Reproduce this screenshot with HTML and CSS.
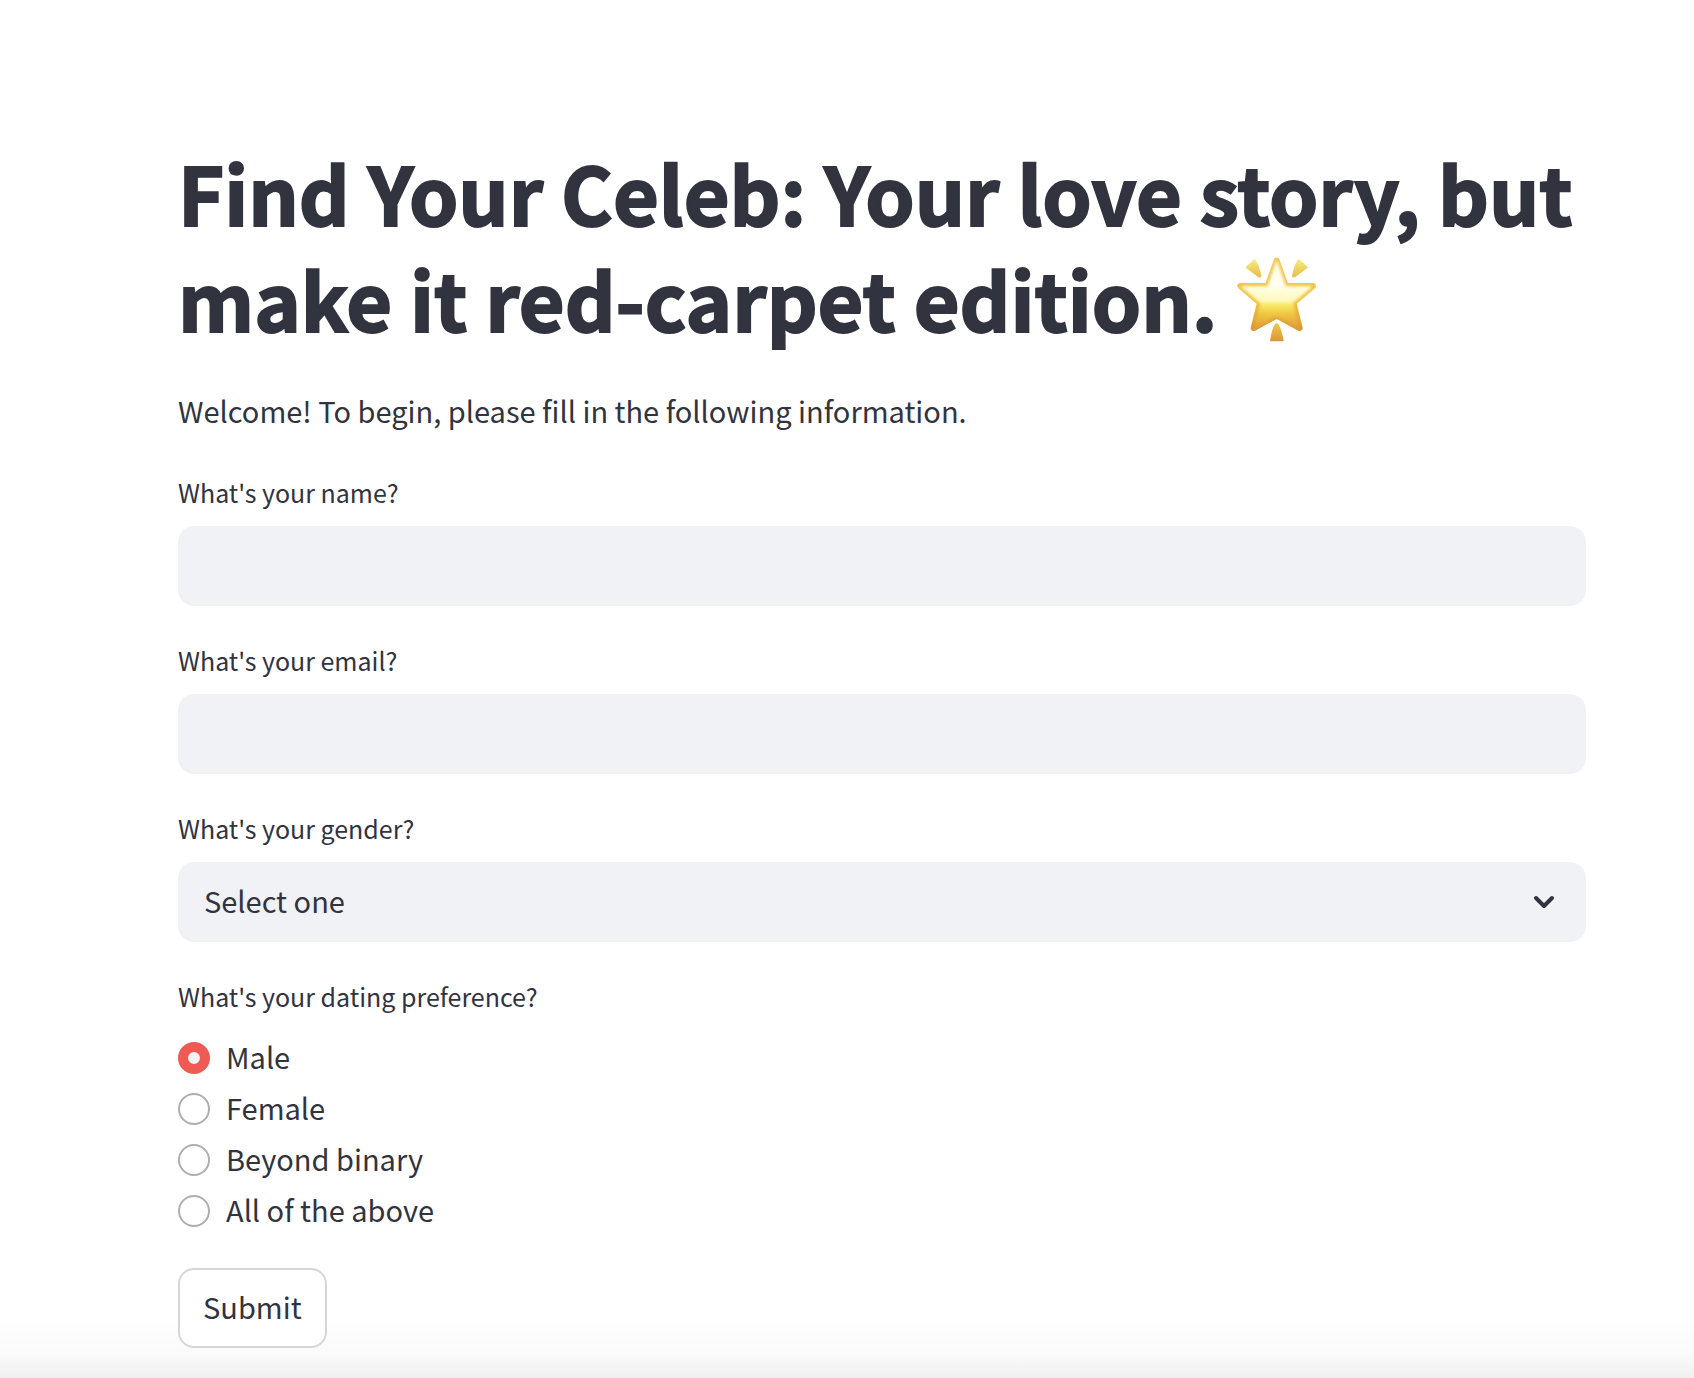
FILE: index.html
```html
<!DOCTYPE html>
<html lang="en">
<head>
    <meta charset="UTF-8">
    <meta name="viewport" content="width=device-width, initial-scale=1.0">
    <title>Find Your Celeb</title>
    <link rel="stylesheet" href="styles.css">
</head>
<body>
    <main class="container">
        <h1 class="title">
            Find Your Celeb: Your love story, but make it red-carpet edition.
            <svg class="star" viewBox="45 45 252 270" aria-hidden="true">
                <defs>
                    <linearGradient id="edge" x1="0" y1="0" x2="0" y2="1">
                        <stop offset="0" stop-color="#f4c650"/>
                        <stop offset="0.6" stop-color="#f0c440"/>
                        <stop offset="1" stop-color="#dc9a38"/>
                    </linearGradient>
                    <linearGradient id="body" x1="0" y1="0" x2="0" y2="1">
                        <stop offset="0" stop-color="#fffde8"/>
                        <stop offset="0.35" stop-color="#fffff0"/>
                        <stop offset="0.61" stop-color="#fdfab8"/>
                        <stop offset="0.65" stop-color="#f8ec6c"/>
                        <stop offset="0.8" stop-color="#f0c840"/>
                        <stop offset="1" stop-color="#e2a03a"/>
                    </linearGradient>
                    <linearGradient id="ray" x1="0" y1="0" x2="0" y2="1">
                        <stop offset="0" stop-color="#f6ea7c"/>
                        <stop offset="1" stop-color="#e6c04c"/>
                    </linearGradient>
                    <linearGradient id="tail" x1="0" y1="0" x2="0" y2="1">
                        <stop offset="0" stop-color="#ecc848"/>
                        <stop offset="1" stop-color="#dc9838"/>
                    </linearGradient>
                    <filter id="soft" x="-10%" y="-10%" width="120%" height="120%">
                        <feGaussianBlur stdDeviation="4"/>
                    </filter>
                </defs>
                <path fill="url(#ray)" stroke="url(#ray)" stroke-width="6" stroke-linejoin="round" d="M81 82 L104 61 Q115 76 121 108 Q119 111 114 107 Z"/>
                <path fill="url(#ray)" stroke="url(#ray)" stroke-width="6" stroke-linejoin="round" d="M260 82 L236 61 Q225 76 219 108 Q221 111 226 107 Z"/>
                <path fill="url(#tail)" stroke="url(#tail)" stroke-width="4" stroke-linejoin="round" d="M170 252 Q179 252 189 302 L152 302 Q161 252 170 252 Z"/>
                <path fill="url(#edge)" stroke="url(#edge)" stroke-width="18" stroke-linejoin="round" d="M170 62 L197 138 L279 138 L220 188 L239 264 L170 227 L101 264 L120 188 L61 138 L143 138 Z"/>
                <path fill="url(#body)" filter="url(#soft)" stroke="url(#body)" stroke-width="4" stroke-linejoin="round" d="M170 65 L196 140 L273 141 L217 188 L234 260 L170 225 L106 260 L123 188 L67 141 L144 140 Z"/>
            </svg>
        </h1>
        <p class="intro">Welcome! To begin, please fill in the following information.</p>

        <form class="form">
            <div class="field">
                <label class="label" for="name">What's your name?</label>
                <input class="input" type="text" id="name" name="name">
            </div>

            <div class="field">
                <label class="label" for="email">What's your email?</label>
                <input class="input" type="email" id="email" name="email">
            </div>

            <div class="field">
                <label class="label" for="gender">What's your gender?</label>
                <div class="select">
                    <select class="input" id="gender" name="gender">
                        <option>Select one</option>
                    </select>
                    <svg class="chevron" viewBox="0 0 24 24" aria-hidden="true">
                        <path d="M4 8 L12 16 L20 8"/>
                    </svg>
                </div>
            </div>

            <fieldset class="field options">
                <legend class="label">What's your dating preference?</legend>
                <label class="option">
                    <input class="radio" type="radio" name="preference" value="male" checked>
                    <span class="option-text">Male</span>
                </label>
                <label class="option">
                    <input class="radio" type="radio" name="preference" value="female">
                    <span class="option-text">Female</span>
                </label>
                <label class="option">
                    <input class="radio" type="radio" name="preference" value="beyond-binary">
                    <span class="option-text">Beyond binary</span>
                </label>
                <label class="option">
                    <input class="radio" type="radio" name="preference" value="all">
                    <span class="option-text">All of the above</span>
                </label>
            </fieldset>

            <button class="submit" type="submit">Submit</button>
        </form>
    </main>
</body>
</html>
```
FILE: styles.css
```css
* {
    box-sizing: border-box;
}

body {
    margin: 0;
    min-height: 100vh;
    background: linear-gradient(to top, #f0f0f0, #fafafa 24px, #ffffff 60px);
    color: #31333f;
    font-family: "Noto Sans CJK SC", "Source Sans Pro", sans-serif;
    font-size: 29px;
    line-height: 48px;
}

.container {
    padding: 139px 108px 30px 178px;
}

.title {
    margin: 0 0 35px;
    font-size: 79px;
    font-weight: 700;
    line-height: 106px;
    -webkit-text-stroke: 2px #31333f;
}

.star {
    width: 84px;
    height: 90px;
    vertical-align: -13px;
}

.intro {
    margin: 0 0 36px;
}

.form {
    display: flex;
    flex-direction: column;
    align-items: flex-start;
    gap: 32px;
}

.field {
    display: flex;
    flex-direction: column;
    gap: 12px;
    width: 100%;
}

.label {
    font-size: 25px;
    line-height: 44px;
}

.input {
    width: 100%;
    height: 80px;
    padding: 0 26px 4px;
    border: none;
    border-radius: 16px;
    background: #f0f2f6;
    color: inherit;
    font: inherit;
    appearance: none;
}

/* The chevron shares the grid cell with the select */
.select {
    display: grid;
    align-items: center;
}

.select > * {
    grid-area: 1 / 1;
}

.chevron {
    justify-self: end;
    width: 24px;
    height: 24px;
    margin-right: 30px;
    fill: none;
    stroke: #31333f;
    stroke-width: 4;
    stroke-linecap: round;
    stroke-linejoin: round;
    pointer-events: none;
}

.options {
    gap: 0;
    min-width: 0;
    margin: 0;
    padding: 0;
    border: none;
}

.options .label {
    padding: 0 0 14px;
}

.option {
    display: flex;
    align-items: center;
    gap: 16px;
    height: 51px;
}

.option-text {
    padding-bottom: 4px;
}

.radio {
    width: 32px;
    height: 32px;
    margin: 0;
    border: 2px solid #adaeb3;
    border-radius: 50%;
    background: #ffffff;
    appearance: none;
}

.radio:checked {
    border: 10px solid #f05a54;
    background: #f0f2f6;
}

.submit {
    height: 80px;
    padding: 0 23px 4px;
    border: 2px solid #d6d6d9;
    border-radius: 16px;
    background: #ffffff;
    color: inherit;
    font: inherit;
    cursor: pointer;
}
```
